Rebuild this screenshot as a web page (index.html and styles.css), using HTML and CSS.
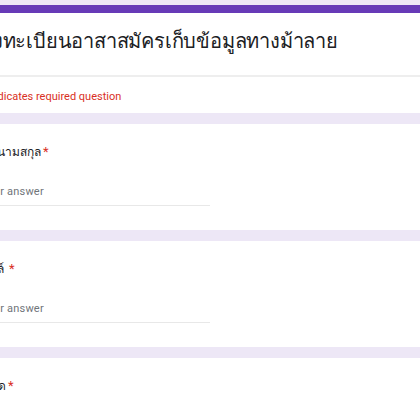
FILE: index.html
```html
<!DOCTYPE html>
<html lang="th">
<head>
  <meta charset="UTF-8" />
  <title>ลงทะเบียนอาสาสมัครเก็บข้อมูลทางม้าลาย</title>
  <link rel="stylesheet" href="styles.css">
</head>
<body>
  <div class="form">
    <!-- Header card with the purple top bar -->
    <div class="card card-header">
      <h1 class="form-title">ลงทะเบียนอาสาสมัครเก็บข้อมูลทางม้าลาย</h1>
      <p class="required-note">* Indicates required question</p>
    </div>

    <div class="card question">
      <div class="question-label">ชื่อ-นามสกุล<span class="star">*</span></div>
      <div class="answer">Your answer</div>
    </div>

    <div class="card question">
      <div class="question-label">อีเมล์ <span class="star">*</span></div>
      <div class="answer">Your answer</div>
    </div>

    <div class="card question">
      <div class="question-label">สังกัด<span class="star">*</span></div>
      <div class="answer">Your answer</div>
    </div>
  </div>
</body>
</html>
```

FILE: styles.css
```css
/* Basic Reset */
* {
  margin: 0;
  padding: 0;
  box-sizing: border-box;
}

body {
  background-color: #ede7f6;
  font-family: Roboto, "Liberation Sans", sans-serif;
  color: #202124;
  overflow: hidden;
}

/* The form is wider than the window, so its left side is cut off */
.form {
  display: flex;
  flex-direction: column;
  gap: 11px;
  margin: 0 -44px;
  padding-top: 5px;
}

.card {
  background-color: #fff;
  padding-left: 25px;
}

.card-header {
  border-top: 8px solid #673ab7;
}

.form-title {
  height: 62px;
  padding-top: 9px;
  font-family: "Liberation Serif", serif;
  font-size: 20px;
  font-weight: normal;
  line-height: 38px;
  letter-spacing: -0.2px;
  white-space: nowrap;
}

.required-note {
  margin-left: -25px;
  padding-left: 25px;
  border-top: 2px solid #eeeeee;
  height: 38px;
  padding-top: 12px;
  font-size: 11px;
  line-height: 16px;
  color: #d93025;
}

.question {
  height: 106px;
  padding-top: 18px;
}

.question-label {
  margin-left: -3px;
  font-family: "Liberation Serif", serif;
  font-size: 12px;
  line-height: 20px;
  white-space: nowrap;
}

.star {
  color: #d93025;
  font-family: Roboto, sans-serif;
  font-size: 13px;
  margin-left: 2px;
}

.answer {
  width: 229px;
  margin-top: 22px;
  padding-bottom: 5px;
  border-bottom: 1px solid #e8e8e8;
  font-size: 11px;
  line-height: 16px;
  letter-spacing: 0.2px;
  color: #70757a;
}
```
